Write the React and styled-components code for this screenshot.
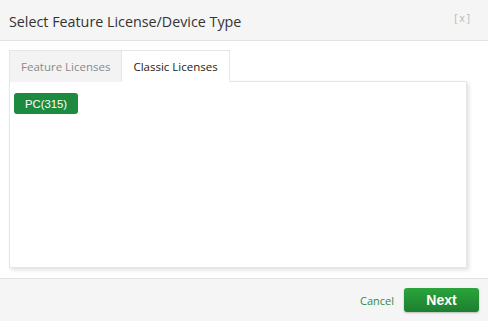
import styled, { createGlobalStyle } from "styled-components";

const GlobalStyle = createGlobalStyle`
  html, body {
    margin: 0;
    padding: 0;
    background: #ffffff;
    font-family: "Open Sans", "Liberation Sans", sans-serif;
  }
`;

const Dialog = styled.div`
  display: flex;
  flex-direction: column;
  width: 488px;
  height: 321px;
  box-sizing: border-box;
  background: #ffffff;
`;

const Header = styled.header`
  display: flex;
  justify-content: space-between;
  align-items: center;
  height: 41px;
  box-sizing: border-box;
  padding: 0 16px 0 9px;
  background: #f5f5f5;
  border-bottom: 1px solid #e2e2e2;
`;

const Title = styled.h1`
  margin: 0;
  padding-top: 2px;
  font-size: 14.3px;
  font-weight: 400;
  color: #333333;
`;

const Close = styled.span`
  align-self: flex-start;
  margin-top: 11px;
  font-size: 10px;
  color: #b5b5b5;
  letter-spacing: 2px;
  cursor: pointer;
`;

const Body = styled.main`
  flex: 1;
  display: flex;
  flex-direction: column;
  padding: 9px 21px 10px 9px;
`;

const TabList = styled.div`
  display: flex;
  height: 31px;
`;

const Tab = styled.div`
  display: flex;
  align-items: center;
  padding: 0 11px;
  box-sizing: border-box;
  font-size: 11.5px;
  color: ${(p) => (p.$active ? "#222222" : "#8a8a8a")};
  background: ${(p) => (p.$active ? "#ffffff" : "#f3f3f3")};
  border: 1px solid #e6e6e6;
  border-bottom: ${(p) => (p.$active ? "1px solid #ffffff" : "none")};
  border-left: ${(p) => (p.$active ? "none" : "1px solid #e6e6e6")};
  margin-bottom: -1px;
  position: relative;
  z-index: 1;
`;

const Panel = styled.section`
  flex: 1;
  border: 1px solid #e6e6e6;
  box-shadow: 2px 2px 4px rgba(0, 0, 0, 0.12);
  padding: 11px 4px;
`;

const DeviceButton = styled.button`
  display: block;
  height: 21px;
  padding: 0 11px;
  border: none;
  border-radius: 3px;
  background: #1c8a3f;
  color: #ffffff;
  font-family: "Liberation Sans", Arial, sans-serif;
  font-size: 11.3px;
  cursor: pointer;
`;

const Footer = styled.footer`
  display: flex;
  justify-content: flex-end;
  align-items: center;
  gap: 10px;
  height: 43px;
  box-sizing: border-box;
  padding: 0 9px 0 0;
  background: #f5f5f5;
  border-top: 1px solid #e2e2e2;
`;

const CancelLink = styled.a`
  font-size: 11px;
  color: #2e8b3e;
  cursor: pointer;
`;

const NextButton = styled.button`
  width: 75px;
  height: 24px;
  border: none;
  border-radius: 3px;
  background: linear-gradient(#2ba43c, #1c7f2f);
  box-shadow: 0 1px 2px rgba(0, 0, 0, 0.25);
  color: #ffffff;
  font-family: "Liberation Sans", Arial, sans-serif;
  font-size: 14px;
  font-weight: 700;
  cursor: pointer;
`;

export default function App() {
  return (
    <Dialog>
      <GlobalStyle />
      <Header>
        <Title>Select Feature License/Device Type</Title>
        <Close>[x]</Close>
      </Header>
      <Body>
        <TabList>
          <Tab>Feature Licenses</Tab>
          <Tab $active>Classic Licenses</Tab>
        </TabList>
        <Panel>
          <DeviceButton>PC(315)</DeviceButton>
        </Panel>
      </Body>
      <Footer>
        <CancelLink>Cancel</CancelLink>
        <NextButton>Next</NextButton>
      </Footer>
    </Dialog>
  );
}
